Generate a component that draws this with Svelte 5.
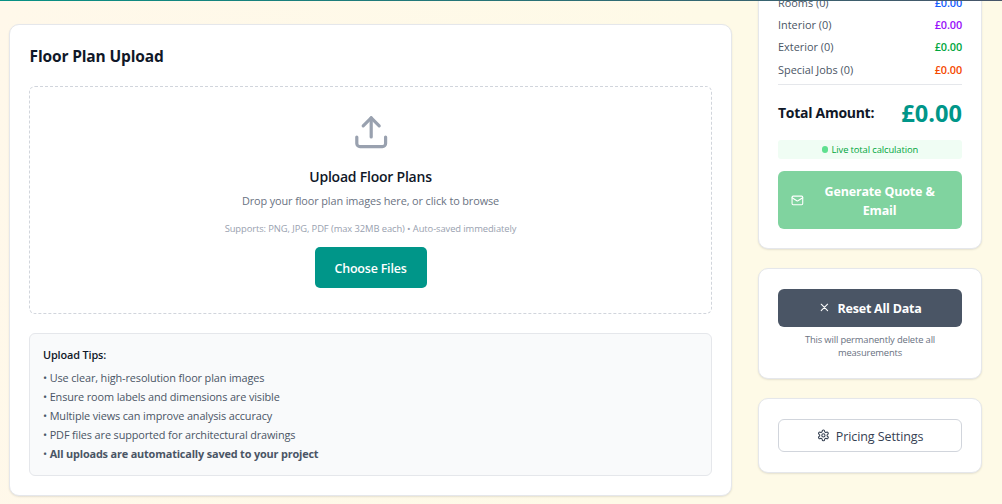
<script>
  const rows = [
    ['Rooms (0)', '#155dfc'],
    ['Interior (0)', '#9810fa'],
    ['Exterior (0)', '#00a63e'],
    ['Special Jobs (0)', '#f54900'],
  ];
  const tips = [
    'Use clear, high-resolution floor plan images',
    'Ensure room labels and dimensions are visible',
    'Multiple views can improve analysis accuracy',
    'PDF files are supported for architectural drawings',
  ];
</script>

<div class="page">
  <div class="bar"></div>

  <main class="card upload">
    <h2>Floor Plan Upload</h2>
    <section class="zone">
      <svg class="up" viewBox="0 0 24 24" fill="none" stroke="currentColor" stroke-width="2" stroke-linecap="round" stroke-linejoin="round">
        <path d="M21 15v4a2 2 0 0 1-2 2H5a2 2 0 0 1-2-2v-4" />
        <path d="m17 8-5-5-5 5" />
        <path d="M12 3v12" />
      </svg>
      <h3>Upload Floor Plans</h3>
      <p class="drop">Drop your floor plan images here, or click to browse</p>
      <p class="types">Supports: PNG, JPG, PDF (max 32MB each) • Auto-saved immediately</p>
      <button class="choose">Choose Files</button>
    </section>
    <section class="tips">
      <h4>Upload Tips:</h4>
      <ul>
        {#each tips as tip}
          <li>• {tip}</li>
        {/each}
        <li>• <strong>All uploads are automatically saved to your project</strong></li>
      </ul>
    </section>
  </main>

  <aside>
    <section class="card summary">
      <div class="rows">
        {#each rows as [label, color]}
          <div class="row"><span>{label}</span><b style="color: {color}">£0.00</b></div>
        {/each}
      </div>
      <div class="total"><span>Total Amount:</span><b>£0.00</b></div>
      <div class="live"><i></i>Live total calculation</div>
      <button class="quote">
        <svg viewBox="0 0 24 24" fill="none" stroke="currentColor" stroke-width="2" stroke-linecap="round" stroke-linejoin="round">
          <rect x="2" y="4" width="20" height="16" rx="2" />
          <path d="m22 7-8.97 5.7a1.94 1.94 0 0 1-2.06 0L2 7" />
        </svg>
        <span>Generate Quote &amp; Email</span>
      </button>
    </section>

    <section class="card">
      <button class="reset">
        <svg viewBox="0 0 24 24" fill="none" stroke="currentColor" stroke-width="2" stroke-linecap="round">
          <path d="M18 6 6 18M6 6l12 12" />
        </svg>
        <span>Reset All Data</span>
      </button>
      <p class="warn">This will permanently delete all measurements</p>
    </section>

    <section class="card">
      <button class="settings">
        <svg viewBox="0 0 24 24" fill="none" stroke="currentColor" stroke-width="2" stroke-linecap="round" stroke-linejoin="round">
          <path d="M12.22 2h-.44a2 2 0 0 0-2 2v.18a2 2 0 0 1-1 1.73l-.43.25a2 2 0 0 1-2 0l-.15-.08a2 2 0 0 0-2.73.73l-.22.38a2 2 0 0 0 .73 2.73l.15.1a2 2 0 0 1 1 1.72v.51a2 2 0 0 1-1 1.74l-.15.09a2 2 0 0 0-.73 2.73l.22.38a2 2 0 0 0 2.73.73l.15-.08a2 2 0 0 1 2 0l.43.25a2 2 0 0 1 1 1.73V20a2 2 0 0 0 2 2h.44a2 2 0 0 0 2-2v-.18a2 2 0 0 1 1-1.73l.43-.25a2 2 0 0 1 2 0l.15.08a2 2 0 0 0 2.73-.73l.22-.39a2 2 0 0 0-.73-2.73l-.15-.08a2 2 0 0 1-1-1.74v-.5a2 2 0 0 1 1-1.74l.15-.09a2 2 0 0 0 .73-2.73l-.22-.38a2 2 0 0 0-2.73-.73l-.15.08a2 2 0 0 1-2 0l-.43-.25a2 2 0 0 1-1-1.73V4a2 2 0 0 0-2-2z" />
          <circle cx="12" cy="12" r="3" />
        </svg>
        <span>Pricing Settings</span>
      </button>
    </section>
  </aside>
</div>

<style>
  :global(body) { overflow: hidden; }
  .page {
    height: 504px;
    overflow: hidden;
    display: flex;
    align-items: flex-start;
    gap: 26px;
    padding-left: 9px;
    box-sizing: border-box;
    background: linear-gradient(100deg, #fff8ea 0%, #fefae7 65%, #fefae7 100%);
    font-family: "Open Sans", "Noto Sans", sans-serif;
  }
  .page *, .bar { box-sizing: border-box; }
  .bar {
    position: fixed;
    z-index: 2;
    top: 0;
    left: 0;
    right: 0;
    height: 1px;
    background: linear-gradient(90deg, #079184, #475569);
  }
  h2, h3, h4, p, ul { margin: 0; padding: 0; }
  ul { list-style: none; }
  button { font-family: inherit; border: 0; display: flex; align-items: center; padding: 0; }
  .card {
    background: #fff;
    border: 1px solid #e5e7eb;
    border-radius: 10px;
    padding: 20px 19px;
    box-shadow: 0 1px 2px rgba(0, 0, 0, 0.1);
  }
  .upload { width: 723px; height: 472px; margin-top: 24px; }
  h2 { padding-left: 0.6px; font-size: 15.5px; line-height: 22px; font-weight: 700; letter-spacing: -0.15px; color: #101828; }
  .zone {
    height: 228px;
    margin-top: 19px;
    border: 1px dashed #d1d5dc;
    border-radius: 6px;
    padding-top: 25.8px;
    display: flex;
    flex-direction: column;
    align-items: center;
  }
  .up { width: 38.4px; height: 38.4px; margin-left: 1.4px; color: #99a1af; flex: none; }
  h3 { margin-top: 14.6px; font-size: 14px; line-height: 22px; font-weight: 600; letter-spacing: -0.22px; color: #101828; }
  .drop { margin-top: 4.2px; font-size: 10.9px; line-height: 18px; letter-spacing: -0.115px; color: #6a7282; }
  .types { margin-top: 12px; font-size: 9.4px; line-height: 14px; letter-spacing: -0.09px; color: #99a1af; }
  .choose {
    width: 112px;
    height: 41px;
    margin-top: 11px;
    padding-top: 2px;
    justify-content: center;
    border-radius: 5px;
    background: #009689;
    color: #fff;
    font-size: 12.5px;
    font-weight: 600;
    letter-spacing: -0.21px;
  }
  .tips {
    height: 143px;
    margin-top: 19px;
    padding: 12px 13px;
    border: 1px solid #e5e7eb;
    border-radius: 6px;
    background: #f9fafb;
  }
  h4 { font-size: 10.9px; line-height: 18px; font-weight: 600; letter-spacing: -0.14px; color: #101828; }
  ul { margin-top: 4px; color: #4a5565; font-size: 10.9px; line-height: 19px; letter-spacing: -0.125px; }
  strong { font-weight: 700; letter-spacing: -0.165px; }
  aside { width: 224px; margin-top: -27.3px; display: flex; flex-direction: column; gap: 19px; }
  .summary { height: 276.3px; }
  .rows { display: flex; flex-direction: column; gap: 4.8px; height: 91.3px; border-bottom: 1px solid #e5e7eb; }
  .row { display: flex; justify-content: space-between; font-size: 10.9px; line-height: 17.6px; color: #4a5565; }
  .row b { font-weight: 600; letter-spacing: -0.12px; }
  .total { margin-top: 13px; height: 29px; display: flex; align-items: center; justify-content: space-between; }
  .total span { font-size: 14px; font-weight: 700; letter-spacing: -0.28px; color: #101828; }
  .total b { padding-top: 1px; font-size: 23.6px; line-height: 29px; color: #009689; }
  .live {
    height: 19px;
    margin-top: 13px;
    display: flex;
    align-items: center;
    justify-content: center;
    gap: 3.2px;
    border-radius: 3px;
    background: #f0fdf4;
    color: #00a63e;
    font-size: 9.4px;
    letter-spacing: -0.11px;
  }
  .live i { width: 6.4px; height: 6.4px; border-radius: 50%; background: #5fe08f; }
  .quote, .reset, .settings { width: 184px; border-radius: 6px; justify-content: center; gap: 6.4px; }
  .quote svg, .reset svg, .settings svg { width: 12.8px; height: 12.8px; flex: none; }
  .quote {
    height: 58px;
    margin-top: 12px;
    padding: 0 12.8px;
    background: #80d39f;
    color: #fff;
    font-size: 12.5px;
    line-height: 19.2px;
    font-weight: 700;
    letter-spacing: -0.16px;
  }
  .quote span { flex: 1; padding-top: 1.6px; text-align: center; }
  .reset { height: 38px; background: #4a5565; color: #fff; font-size: 12.5px; font-weight: 700; letter-spacing: -0.23px; }
  .reset svg { margin-bottom: 1px; }
  .warn { margin: 6px auto 0; width: 150px; text-align: center; font-size: 9.4px; line-height: 13px; letter-spacing: -0.15px; color: #6a7282; height: 25px; }
  .settings { height: 33px; border: 1px solid #d1d5dc; background: #fff; color: #364153; font-size: 12.5px; letter-spacing: -0.09px; }
  .settings span { padding-top: 1px; }
</style>
